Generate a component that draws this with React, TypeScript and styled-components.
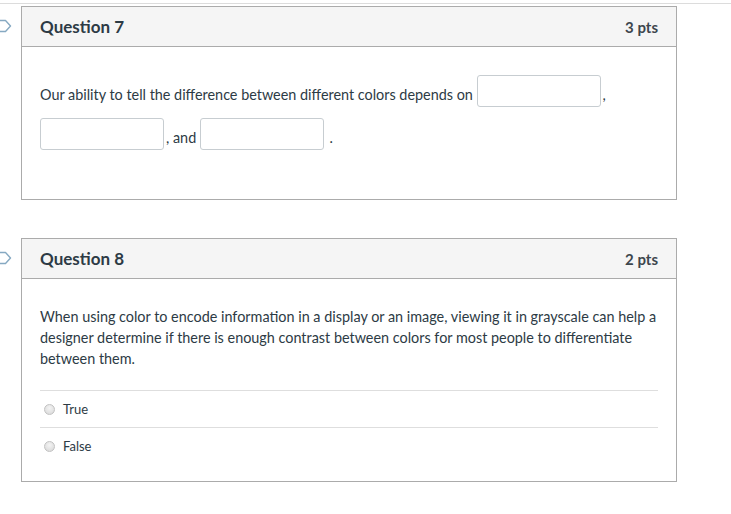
import React from 'react'
import styled, { createGlobalStyle } from 'styled-components'

const GlobalStyle = createGlobalStyle`
  body {
    margin: 0;
    background: #fff;
    font-family: Lato, "Open Sans", "Liberation Sans", sans-serif;
    color: #2d3b45;
  }
`

const SPage = styled.div`
  padding-top: 3px;
`

const STopRule = styled.div`
  height: 1px;
  background: #dcdcdc;
  margin-bottom: 2px;
`

const SQuestionList = styled.div`
  display: flex;
  flex-direction: column;
  gap: 38px;
`

const SQuestionRow = styled.div`
  display: flex;
  align-items: flex-start;
`

const SGutter = styled.div`
  width: 21px;
  flex: 0 0 21px;
  padding-top: 13px;
`

const SCard = styled.div`
  width: 654px;
  border: 1px solid #ababab;
  background: #fff;
`

const SHeader = styled.div`
  display: flex;
  align-items: center;
  justify-content: space-between;
  height: 39px;
  padding: 0 18px;
  background: #f5f5f5;
  border-bottom: 1px solid #ababab;
`

const STitle = styled.h2`
  margin: 0;
  font-size: 17px;
  font-weight: 700;
  color: #2d3b45;
`

const SPoints = styled.span`
  font-size: 15px;
  font-weight: 700;
  color: #3d464d;
`

const SBody = styled.div<{ $top: number; $bottom: number }>`
  padding: ${p => p.$top}px 18px ${p => p.$bottom}px;
  font-size: 14.4px;
  line-height: 21px;
`

const SBlankFlow = styled.div`
  line-height: 43px;
`

const SBlank = styled.input`
  box-sizing: border-box;
  display: inline-block;
  vertical-align: 4px;
  width: 124px;
  height: 32px;
  margin: 0 2px 0 0;
  border: 1px solid #c7cdd1;
  border-radius: 3px;
  background: #fff;
  font: inherit;
  line-height: normal;
`

const SPrompt = styled.p`
  margin: 0 0 21px;
`

const SAnswer = styled.label`
  display: flex;
  align-items: center;
  height: 36px;
  padding-left: 4px;
  border-top: 1px solid #dedede;
  font-size: 13px;
  color: #2d3b45;
`

const SRadio = styled.span`
  box-sizing: border-box;
  width: 11px;
  height: 11px;
  margin-right: 8px;
  border-radius: 50%;
  border: 1px solid #c2c2c2;
  background: radial-gradient(circle at 50% 35%, #f4f4f4, #d6d6d6);
`

const Flag: React.FC = () => (
  <svg width="14" height="14" viewBox="0 0 14 14" style={{ display: 'block', marginLeft: -2 }}>
    <path
      d="M-2 1.5 H7.5 L12.5 7 L7.5 12.5 H-2"
      fill="none"
      stroke="#86a9c2"
      strokeWidth="1.4"
      strokeLinejoin="round"
    />
  </svg>
)

const App: React.FC = () => {
  return (
    <>
      <GlobalStyle />
      <SPage>
        <STopRule />
        <SQuestionList>
          <SQuestionRow>
            <SGutter>
              <Flag />
            </SGutter>
            <SCard>
              <SHeader>
                <STitle>Question 7</STitle>
                <SPoints>3 pts</SPoints>
              </SHeader>
              <SBody $top={26} $bottom={40}>
                <SBlankFlow>
                  Our ability to tell the difference between different colors depends on{' '}
                  <SBlank type="text" aria-label="blank 1" />, <SBlank type="text" aria-label="blank 2" />,
                  and <SBlank type="text" aria-label="blank 3" /> .
                </SBlankFlow>
              </SBody>
            </SCard>
          </SQuestionRow>
          <SQuestionRow>
            <SGutter>
              <Flag />
            </SGutter>
            <SCard>
              <SHeader>
                <STitle>Question 8</STitle>
                <SPoints>2 pts</SPoints>
              </SHeader>
              <SBody $top={27} $bottom={17}>
                <SPrompt>
                  When using color to encode information in a display or an image, viewing it in grayscale can
                  help a designer determine if there is enough contrast between colors for most people to
                  differentiate between them.
                </SPrompt>
                <SAnswer>
                  <SRadio />
                  True
                </SAnswer>
                <SAnswer>
                  <SRadio />
                  False
                </SAnswer>
              </SBody>
            </SCard>
          </SQuestionRow>
        </SQuestionList>
      </SPage>
    </>
  )
}

export default App
